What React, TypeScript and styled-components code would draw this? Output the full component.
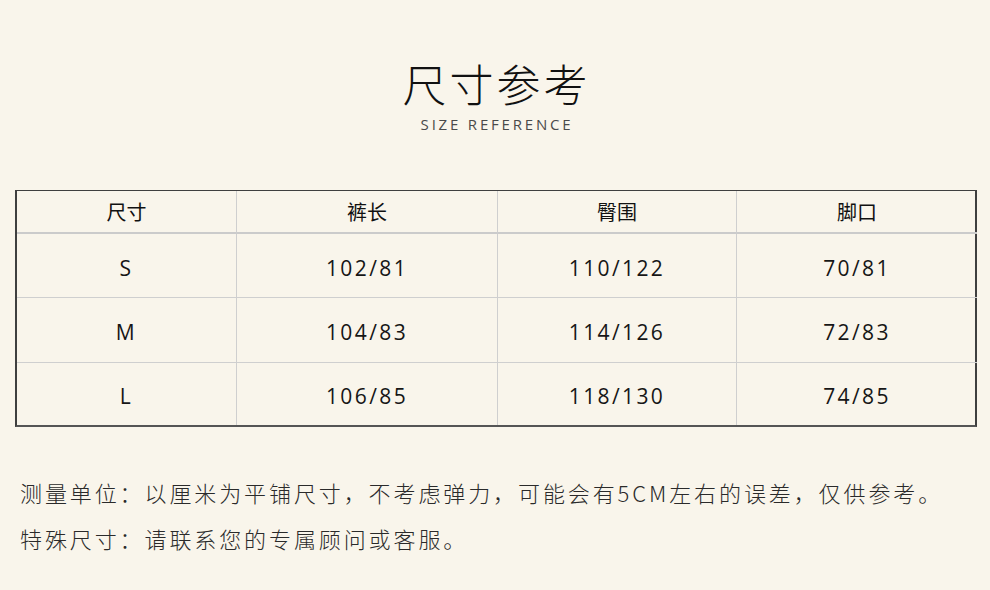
import React from "react";
import styled, { createGlobalStyle } from "styled-components";

const GlobalStyle = createGlobalStyle`
  html, body {
    margin: 0;
    padding: 0;
    background: #f9f5eb;
  }
`;

const columns = ["尺寸", "裤长", "臀围", "脚口"];

const rows = [
  ["S", "102/81", "110/122", "70/81"],
  ["M", "104/83", "114/126", "72/83"],
  ["L", "106/85", "118/130", "74/85"],
];

const App: React.FC = () => {
  return (
    <Page>
      <GlobalStyle />
      <Heading>
        <Title>尺寸参考</Title>
        <Subtitle>SIZE REFERENCE</Subtitle>
      </Heading>
      <Table>
        {columns.map((c, i) => (
          <HeadCell key={c} $last={i === columns.length - 1}>
            {c}
          </HeadCell>
        ))}
        {rows.map((r, ri) =>
          r.map((v, ci) => (
            <Cell
              key={ri + "-" + ci}
              $last={ci === r.length - 1}
              $bottom={ri === rows.length - 1}
            >
              {v}
            </Cell>
          ))
        )}
      </Table>
      <Notes>
        <Note>测量单位：以厘米为平铺尺寸，不考虑弹力，可能会有5CM左右的误差，仅供参考。</Note>
        <Note>特殊尺寸：请联系您的专属顾问或客服。</Note>
      </Notes>
    </Page>
  );
};

export default App;

const Page = styled.div`
  width: 990px;
  height: 590px;
  box-sizing: border-box;
  padding-top: 51px;
  background: #f9f5eb;
  color: #1c1c1c;
  overflow: hidden;
`;

const Heading = styled.div`
  display: flex;
  flex-direction: column;
  align-items: center;
`;

const Title = styled.h1`
  margin: 0;
  font-family: "Noto Sans CJK SC", sans-serif;
  font-weight: 300;
  font-size: 44px;
  line-height: 64px;
  letter-spacing: 3px;
  padding-left: 3px;
  color: #111;
`;

const Subtitle = styled.div`
  padding-left: 4px;
  font-family: "Open Sans", sans-serif;
  font-size: 15px;
  line-height: 18px;
  letter-spacing: 2.8px;
  color: #4a4a4a;
`;

const Table = styled.div`
  display: grid;
  grid-template-columns: 220px 261px 239px 240px;
  grid-template-rows: 43px 64px 65px 62px;
  margin: 57px 0 0 15px;
  width: 962px;
  box-sizing: border-box;
  border-top: 1.5px solid #3f3f3f;
  border-left: 2px solid #3f3f3f;
  border-right: 2px solid #3f3f3f;
  border-bottom: 2px solid #555;
`;

const HeadCell = styled.div<{ $last?: boolean }>`
  display: flex;
  align-items: center;
  justify-content: center;
  font-family: "Noto Sans CJK SC", sans-serif;
  font-size: 20px;
  color: #111;
  border-right: ${(p) => (p.$last ? "none" : "1px solid #cfcfcf")};
  border-bottom: 2px solid #cbcbcb;
`;

const Cell = styled.div<{ $last?: boolean; $bottom?: boolean }>`
  display: flex;
  align-items: center;
  justify-content: center;
  padding-top: 4px;
  font-family: "Open Sans", sans-serif;
  font-size: 21px;
  letter-spacing: 2.4px;
  color: #161616;
  border-right: ${(p) => (p.$last ? "none" : "1px solid #cfcfcf")};
  border-bottom: ${(p) => (p.$bottom ? "none" : "1px solid #cfcfcf")};
`;

const Notes = styled.div`
  display: flex;
  flex-direction: column;
  gap: 13px;
  margin: 49px 0 0 20px;
`;

const Note = styled.p`
  margin: 0;
  font-family: "Noto Sans CJK SC", sans-serif;
  font-weight: 300;
  font-size: 22px;
  line-height: 33px;
  letter-spacing: 2.9px;
  color: #2a2a2a;
`;
